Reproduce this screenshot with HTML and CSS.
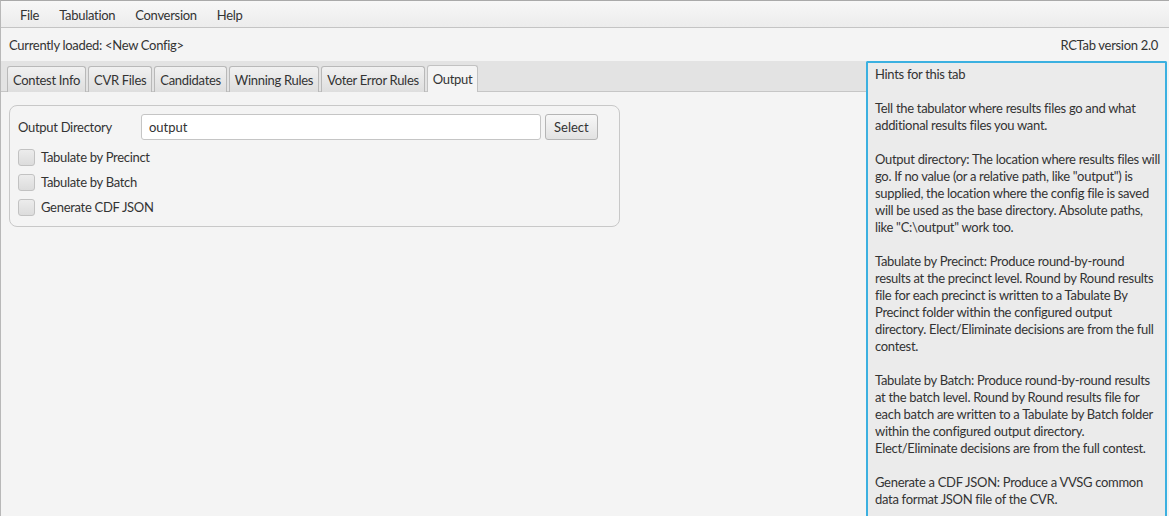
FILE: index.html
```html
<!DOCTYPE html>
<html lang="en">
<head>
  <meta charset="UTF-8" />
  <meta name="viewport" content="width=device-width, initial-scale=1.0"/>
  <title>RCTab</title>
  <link rel="stylesheet" href="styles.css">
</head>
<body>
  <div class="window">
    <div class="menubar">
      <span class="menu">File</span>
      <span class="menu">Tabulation</span>
      <span class="menu">Conversion</span>
      <span class="menu">Help</span>
    </div>

    <div class="status">
      <span>Currently loaded: &lt;New Config&gt;</span>
      <span>RCTab version 2.0</span>
    </div>

    <div class="main">
      <div class="tab-pane">
        <div class="tab-header">
          <div class="tab">Contest Info</div>
          <div class="tab">CVR Files</div>
          <div class="tab">Candidates</div>
          <div class="tab">Winning Rules</div>
          <div class="tab">Voter Error Rules</div>
          <div class="tab active">Output</div>
        </div>
        <div class="tab-content">
          <div class="group">
            <div class="row">
              <label class="field-label">Output Directory</label>
              <input type="text" class="text-input" value="output">
              <button class="btn">Select</button>
            </div>
            <label class="check"><span class="box"></span>Tabulate by Precinct</label>
            <label class="check"><span class="box"></span>Tabulate by Batch</label>
            <label class="check"><span class="box"></span>Generate CDF JSON</label>
          </div>
        </div>
      </div>

      <div class="hints">
        <p>Hints for this tab</p>
        <p>Tell the tabulator where results files go and what additional results files you want.</p>
        <p>Output directory: The location where results files will go. If no value (or a relative path, like "output") is supplied, the location where the config file is saved will be used as the base directory. Absolute paths, like "C:\output" work too.</p>
        <p>Tabulate by Precinct: Produce round-by-round results at the precinct level. Round by Round results file for each precinct is written to a Tabulate By Precinct folder within the configured output directory. Elect/Eliminate decisions are from the full contest.</p>
        <p>Tabulate by Batch: Produce round-by-round results at the batch level. Round by Round results file for each batch are written to a Tabulate by Batch folder within the configured output directory. Elect/Eliminate decisions are from the full contest.</p>
        <p>Generate a CDF JSON: Produce a VVSG common data format JSON file of the CVR.</p>
      </div>
    </div>
  </div>
</body>
</html>
```

FILE: styles.css
```css
html, body {
  margin: 0;
  padding: 0;
  height: 100%;
  overflow: hidden;
}

body {
  font-family: 'Lato', 'Liberation Sans', sans-serif;
  font-size: 13px;
  letter-spacing: -0.3px;
  color: #333;
  background: #f4f4f4;
}

.window {
  height: 100%;
  border-top: 1px solid #a9a9a9;
  border-left: 1px solid #b8b8b8;
  box-sizing: border-box;
  display: flex;
  flex-direction: column;
}

.menubar {
  height: 27px;
  display: flex;
  align-items: center;
  padding: 1px 0 0 9px;
  background: linear-gradient(to bottom, #f7f7f7, #ececec);
  border-bottom: 1px solid #c4c4c4;
  box-sizing: border-box;
}

.menu {
  padding: 0 10px;
}

.status {
  height: 33px;
  display: flex;
  justify-content: space-between;
  align-items: center;
  padding: 0 11px 0 8px;
  box-sizing: border-box;
}

.main {
  flex: 1;
  display: flex;
  min-height: 0;
}

.tab-pane {
  flex: 1;
  display: flex;
  flex-direction: column;
}

.tab-header {
  height: 31px;
  background: #e3e3e3;
  border-bottom: 1px solid #c6c6c6;
  display: flex;
  align-items: flex-end;
  gap: 2px;
  padding-left: 6px;
  box-sizing: border-box;
}

.tab {
  height: 26px;
  line-height: 26px;
  padding: 0 5px 0 5px;
  box-sizing: border-box;
  border: 1px solid #b9b9b9;
  border-bottom: none;
  border-radius: 3px 3px 0 0;
  background: linear-gradient(to bottom, #f1f1f1, #dedede);
  margin-bottom: -1px;
}

.tab.active {
  background: #f4f4f4;
  border-color: #c2c2c2;
  height: 27px;
  line-height: 27px;
}

.tab-content {
  flex: 1;
  padding: 13px 246px 0 8px;
}

.group {
  border: 1px solid #c8c8c8;
  border-radius: 8px;
  padding: 8px 8px 9px 8px;
  display: flex;
  flex-direction: column;
  gap: 5px;
}

.row {
  display: flex;
  align-items: center;
  height: 26px;
  margin-bottom: 2px;
}

.field-label {
  width: 123px;
}

.text-input {
  width: 400px;
  height: 26px;
  box-sizing: border-box;
  border: 1px solid #c5c5c5;
  border-radius: 3px;
  padding: 0 7px;
  font: inherit;
  color: #333;
  background: #fff;
  outline: none;
}

.btn {
  margin-left: 4px;
  height: 26px;
  padding: 0 8px;
  font: inherit;
  color: #333;
  border: 1px solid #b5b5b5;
  border-radius: 3px;
  background: linear-gradient(to bottom, #f7f7f7, #e2e2e2);
}

.check {
  display: flex;
  align-items: center;
  height: 20px;
}

.box {
  width: 17px;
  height: 17px;
  box-sizing: border-box;
  border: 1px solid #c2c2c2;
  border-radius: 3px;
  background: linear-gradient(to bottom, #ececec, #dcdcdc);
  margin-right: 6px;
}

.hints {
  width: 301px;
  margin-right: 2px;
  box-sizing: border-box;
  border: 2px solid #3bb0e0;
  border-bottom: none;
  border-radius: 2px 2px 0 0;
  background: #ebebeb;
  padding: 3px 3px 0 7px;
  line-height: 17px;
}

.hints p {
  margin: 0 0 17px 0;
}
```
